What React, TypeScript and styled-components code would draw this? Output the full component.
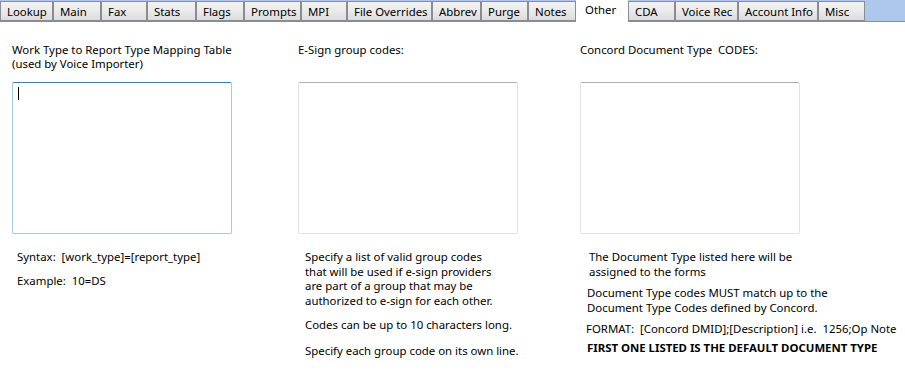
import styled, { createGlobalStyle } from "styled-components";

const GlobalStyle = createGlobalStyle`
  html, body {
    margin: 0;
    padding: 0;
    background: #ffffff;
  }
  body {
    font-family: "Noto Sans", "Open Sans", sans-serif;
    font-size: 11.4px;
    color: #000;
  }
`;

const Page = styled.div`
  width: 905px;
  height: 378px;
  background: #fff;
  overflow: hidden;
`;

const TabStrip = styled.div`
  display: flex;
  align-items: flex-end;
  height: 22px;
  background: #adc8ec;
  border-bottom: 1px solid #898c95;
  box-sizing: border-box;
`;

const Tab = styled.div<{ $w: number; $active?: boolean }>`
  width: ${(p) => p.$w}px;
  box-sizing: border-box;
  height: ${(p) => (p.$active ? "22px" : "20px")};
  margin-bottom: ${(p) => (p.$active ? "-1px" : "0")};
  padding: ${(p) => (p.$active ? "2px 0 0 9px" : "2px 0 0 6px")};
  border: ${(p) => (p.$active ? "none" : "1px solid #898c95")};
  background: ${(p) =>
    p.$active ? "#ffffff" : "linear-gradient(#f2f2f2, #ebebeb 45%, #dcdcdc)"};
  line-height: 15px;
  white-space: nowrap;
  overflow: hidden;
`;

const Content = styled.div`
  display: grid;
  grid-template-columns: 286px 282px 1fr;
  padding: 21px 0 0 12px;
`;

const Column = styled.div`
  display: flex;
  flex-direction: column;
`;

const Label = styled.div`
  min-height: 28px;
  margin-bottom: 11px;
  line-height: 14px;
  white-space: pre;
`;

const TextBox = styled.div<{ $focused?: boolean }>`
  width: 220px;
  height: 152px;
  box-sizing: border-box;
  border: 1px solid ${(p) => (p.$focused ? "#a9c8e6" : "#e2e3ea")};
  border-top-color: ${(p) => (p.$focused ? "#3d7bad" : "#abadb3")};
  border-radius: 2px;
  padding: 4px 0 0 5px;
  background: #fff;
`;

const Caret = styled.span`
  display: block;
  width: 1px;
  height: 13px;
  background: #000;
`;

const Notes = styled.div<{ $indent: number }>`
  margin-top: 16px;
  padding-left: ${(p) => p.$indent}px;
`;

const Para = styled.div<{ $gap?: number; $shift?: number; $bold?: boolean }>`
  margin-top: ${(p) => p.$gap ?? 0}px;
  margin-left: ${(p) => p.$shift ?? 0}px;
  line-height: 14.5px;
  font-weight: ${(p) => (p.$bold ? 700 : 400)};
  white-space: pre;
`;

const tabs = [
  { name: "Lookup", w: 53 },
  { name: "Main", w: 48 },
  { name: "Fax", w: 46 },
  { name: "Stats", w: 49 },
  { name: "Flags", w: 48 },
  { name: "Prompts", w: 57 },
  { name: "MPI", w: 46 },
  { name: "File Overrides", w: 85 },
  { name: "Abbrev", w: 49 },
  { name: "Purge", w: 47 },
  { name: "Notes", w: 48 },
  { name: "Other", w: 52 },
  { name: "CDA", w: 47 },
  { name: "Voice Rec", w: 63 },
  { name: "Account Info", w: 80 },
  { name: "Misc", w: 47 },
];

function App() {
  return (
    <Page>
      <GlobalStyle />
      <TabStrip>
        {tabs.map((t) => (
          <Tab key={t.name} $w={t.w} $active={t.name === "Other"}>
            {t.name}
          </Tab>
        ))}
      </TabStrip>
      <Content>
        <Column>
          <Label>{"Work Type to Report Type Mapping Table\n(used by Voice Importer)"}</Label>
          <TextBox $focused>
            <Caret />
          </TextBox>
          <Notes $indent={5}>
            <Para>{"Syntax:  [work_type]=[report_type]"}</Para>
            <Para $gap={9}>{"Example:  10=DS"}</Para>
          </Notes>
        </Column>
        <Column>
          <Label>E-Sign group codes:</Label>
          <TextBox />
          <Notes $indent={7}>
            <Para>
              {"Specify a list of valid group codes\nthat will be used if e-sign providers\nare part of a group that may be\nauthorized to e-sign for each other."}
            </Para>
            <Para $gap={10}>Codes can be up to 10 characters long.</Para>
            <Para $gap={11}>Specify each group code on its own line.</Para>
          </Notes>
        </Column>
        <Column>
          <Label>{"Concord Document Type  CODES:"}</Label>
          <TextBox />
          <Notes $indent={9}>
            <Para>{"The Document Type listed here will be\nassigned to the forms"}</Para>
            <Para $gap={7} $shift={-2}>
              {"Document Type codes MUST match up to the\nDocument Type Codes defined by Concord."}
            </Para>
            <Para $gap={7} $shift={-3}>
              {"FORMAT:  [Concord DMID];[Description] i.e.  1256;Op Note"}
            </Para>
            <Para $gap={4} $shift={-2} $bold>
              FIRST ONE LISTED IS THE DEFAULT DOCUMENT TYPE
            </Para>
          </Notes>
        </Column>
      </Content>
    </Page>
  );
}

export default App;
